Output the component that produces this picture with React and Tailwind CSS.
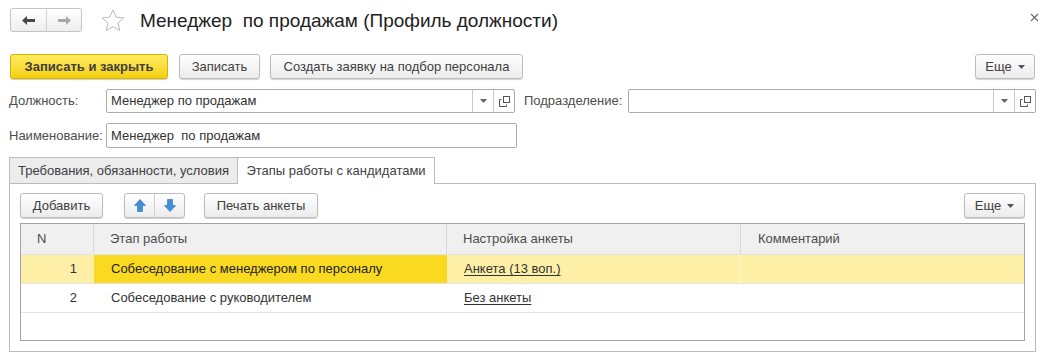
import React from "react";

const Btn = ({ children, className = "" }) => (
  <button
    className={
      "h-[25px] rounded-[3px] border border-[#bdbdbd] bg-gradient-to-b from-white to-[#ececec] shadow-[0_1px_1px_rgba(0,0,0,0.18)] text-[13px] text-[#404040] flex items-center justify-center " +
      className
    }
  >
    {children}
  </button>
);

const MoreBtn = ({ className = "" }) => (
  <Btn className={"gap-[6px] " + className}>
    <span>Еще</span>
    <svg width="7" height="4" viewBox="0 0 7 4">
      <path d="M0 0h7L3.5 4z" fill="#555" />
    </svg>
  </Btn>
);

const Field = ({ value, className = "" }) => (
  <div
    className={
      "h-[24px] rounded-[2px] border border-[#acacac] bg-white flex items-stretch " + className
    }
  >
    <div className="flex-1 flex items-center pl-[4px] text-[#333]">{value}</div>
    <div className="w-[21px] border-l border-[#c8c8c8] flex items-center justify-center">
      <svg width="7" height="4" viewBox="0 0 7 4">
        <path d="M0 0h7L3.5 4z" fill="#666" />
      </svg>
    </div>
    <div className="w-[21px] border-l border-[#c8c8c8] flex items-center justify-center">
      <svg width="11" height="11" viewBox="0 0 11 11" fill="none" stroke="#555" strokeWidth="1">
        <rect x="4.5" y="0.5" width="6" height="6" />
        <path d="M2.5 3.5h-2v7h7v-2" />
      </svg>
    </div>
  </div>
);

const App = () => {
  return (
    <div className="w-[1053px] h-[361px] bg-white font-['Liberation_Sans',Arial,sans-serif] text-[13px] text-[#333] pl-[9px] pr-[17px] pt-[8px] overflow-hidden">
      {/* title */}
      <div className="flex items-center h-[24px]">
        <div className="ml-[1px] w-[72px] h-[24px] rounded-[3px] border border-[#c4c4c4] bg-gradient-to-b from-white to-[#eeeeee] flex">
          <div className="w-[36px] flex items-center justify-center border-r border-[#d4d4d4]">
            <svg width="13" height="9" viewBox="0 0 13 9">
              <path d="M0 4.5L5 0v3h8v3H5v3z" fill="#4a4a4a" />
            </svg>
          </div>
          <div className="flex-1 flex items-center justify-center">
            <svg width="13" height="9" viewBox="0 0 13 9">
              <path d="M13 4.5L8 0v3H0v3h8v3z" fill="#a8a8a8" />
            </svg>
          </div>
        </div>
        <svg className="ml-[19px]" width="24" height="23" viewBox="0 0 24 23">
          <path
            d="M12 1l3.2 7.1 7.6.8-5.7 5.1 1.6 7.5L12 17.6l-6.7 3.9 1.6-7.5L1.2 8.9l7.6-.8z"
            fill="none"
            stroke="#b9b9b9"
            strokeWidth="1"
          />
        </svg>
        <div className="ml-[15px] text-[19px] text-[#222] whitespace-pre leading-none">
          Менеджер  по продажам (Профиль должности)
        </div>
        <svg className="ml-auto mr-[-3px] mb-[6px]" width="9" height="9" viewBox="0 0 9 9">
          <path d="M1 1l7 7M8 1L1 8" stroke="#666" strokeWidth="1.1" />
        </svg>
      </div>

      {/* command bar */}
      <div className="mt-[22px] flex h-[25px]">
        <button className="ml-[1px] w-[158px] h-[25px] rounded-[3px] border border-[#d3b400] bg-gradient-to-b from-[#ffeb5c] to-[#f5d100] shadow-[0_1px_1px_rgba(0,0,0,0.2)] text-[13px] font-bold text-[#404040] flex items-center justify-center">
          Записать и закрыть
        </button>
        <Btn className="ml-[11px] w-[81px]">Записать</Btn>
        <Btn className="ml-[10px] w-[253px]">Создать заявку на подбор персонала</Btn>
        <MoreBtn className="ml-auto mr-[1px] w-[60px]" />
      </div>

      {/* fields */}
      <div className="mt-[10px] flex items-center h-[24px]">
        <div className="w-[97px] text-[#4d4d4d]">Должность:</div>
        <Field className="w-[409px]" value="Менеджер по продажам" />
        <div className="ml-[9px] w-[104px] text-[#4d4d4d]">Подразделение:</div>
        <Field className="flex-1" value="" />
      </div>
      <div className="mt-[10px] flex items-center h-[25px]">
        <div className="w-[97px] text-[#4d4d4d]">Наименование:</div>
        <div className="w-[411px] h-[25px] rounded-[2px] border border-[#acacac] flex items-center pl-[4px] whitespace-pre">
          Менеджер  по продажам
        </div>
      </div>

      {/* tabs */}
      <div className="mt-[9px] flex items-end h-[26px]">
        <div className="w-[229px] h-[26px] border border-b-0 border-[#bcbcbc] bg-[#ececec] flex items-center justify-center text-[#404040]">
          Требования, обязанности, условия
        </div>
        <div className="w-[197px] h-[27px] mb-[-1px] border border-l-0 border-b-0 border-[#bcbcbc] bg-white flex items-center justify-center text-[#404040] relative z-10">
          Этапы работы с кандидатами
        </div>
      </div>

      {/* tab page */}
      <div className="h-[169px] border border-[#bcbcbc] px-[10px] pt-[9px]">
        <div className="flex h-[25px]">
          <Btn className="w-[83px]">Добавить</Btn>
          <div className="ml-[21px] w-[61px] h-[25px] rounded-[3px] border border-[#bdbdbd] bg-gradient-to-b from-white to-[#ececec] shadow-[0_1px_1px_rgba(0,0,0,0.18)] flex">
            <div className="w-[30px] border-r border-[#d0d0d0] flex items-center justify-center">
              <svg width="12" height="13" viewBox="0 0 12 13">
                <path d="M6 0.5L11.5 6.5H8.5V12.5H3.5V6.5H0.5z" fill="#3f8fdc" stroke="#2a6fb5" strokeWidth="0.6" />
              </svg>
            </div>
            <div className="flex-1 flex items-center justify-center">
              <svg width="12" height="13" viewBox="0 0 12 13">
                <path d="M6 12.5L11.5 6.5H8.5V0.5H3.5V6.5H0.5z" fill="#3f8fdc" stroke="#2a6fb5" strokeWidth="0.6" />
              </svg>
            </div>
          </div>
          <Btn className="ml-[19px] w-[114px]">Печать анкеты</Btn>
          <MoreBtn className="ml-auto w-[61px]" />
        </div>

        <div className="mt-[5px] h-[118px] border border-[#a3a3a3] bg-white">
          <div className="grid grid-cols-[73px_353px_294px_1fr] h-[31px] bg-[#f0f0f0] border-b border-[#e2e2e2] text-[#4d4d4d]">
            <div className="flex items-center pl-[16px] border-r border-[#d8d8d8]">N</div>
            <div className="flex items-center pl-[16px] border-r border-[#d8d8d8]">Этап работы</div>
            <div className="flex items-center pl-[16px] border-r border-[#d8d8d8]">Настройка анкеты</div>
            <div className="flex items-center pl-[17px]">Комментарий</div>
          </div>
          <div className="grid grid-cols-[73px_353px_294px_1fr] h-[29px] border-b border-[#e4e4e4]">
            <div className="flex items-center justify-end pr-[17px] bg-[#fdf0a6]">1</div>
            <div className="flex items-center pl-[17px] bg-[#fad921] text-[#222]">Собеседование с менеджером по персоналу</div>
            <div className="flex items-center pl-[17px] bg-[#fdf0a6] border-r border-[#fff8d6]">
              <span className="underline underline-offset-2">Анкета (13 воп.)</span>
            </div>
            <div className="bg-[#fdf0a6]"></div>
          </div>
          <div className="grid grid-cols-[73px_353px_294px_1fr] h-[29px] border-b border-[#e4e4e4]">
            <div className="flex items-center justify-end pr-[17px]">2</div>
            <div className="flex items-center pl-[17px]">Собеседование с руководителем</div>
            <div className="flex items-center pl-[17px]">
              <span className="underline underline-offset-2">Без анкеты</span>
            </div>
            <div></div>
          </div>
        </div>
      </div>
    </div>
  );
};

export default App;
